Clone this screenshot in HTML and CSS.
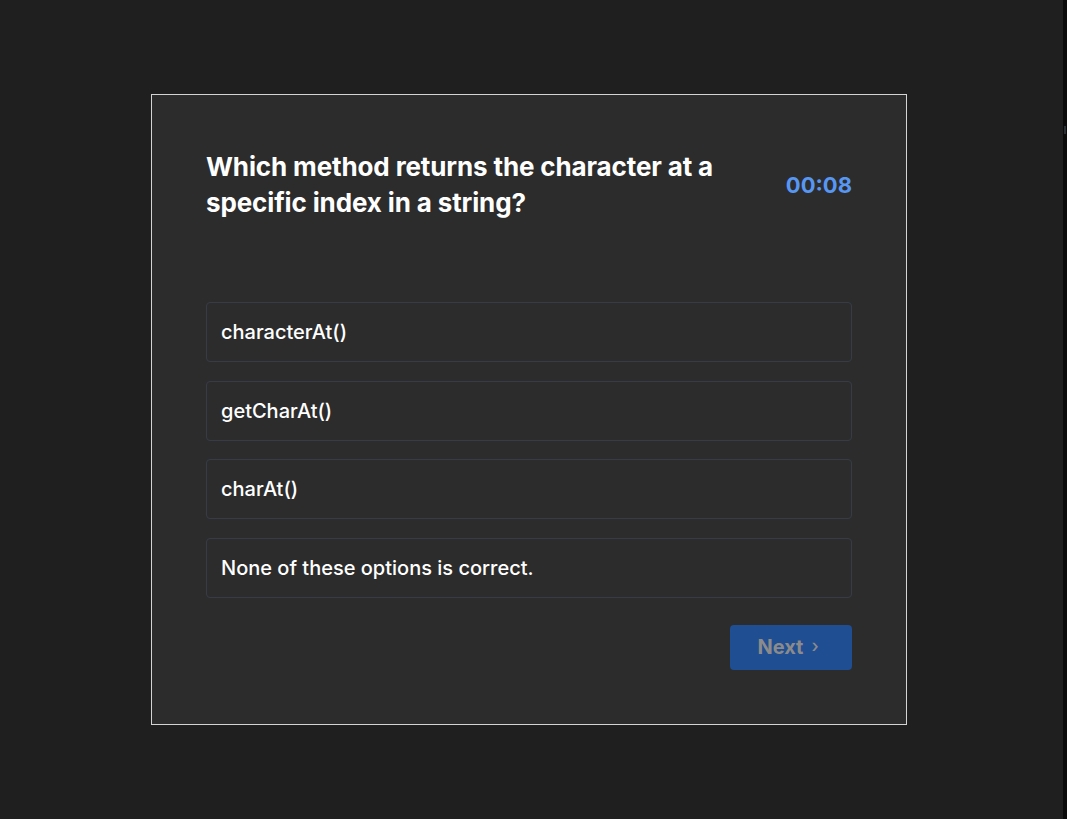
FILE: index.html
```html
<!DOCTYPE html>
<html lang="en">
<head>
<meta charset="utf-8">
<title>Quiz</title>
<link rel="stylesheet" href="styles.css">
</head>
<body>
<div class="app">
  <main class="stage">
    <section class="card">
      <header class="card-head">
        <h1 class="question">Which method returns the character at a specific index in a string?</h1>
        <div class="timer">00:08</div>
      </header>
      <ul class="options">
        <li class="option">characterAt()</li>
        <li class="option">getCharAt()</li>
        <li class="option">charAt()</li>
        <li class="option">None of these options is correct.</li>
      </ul>
      <div class="actions">
        <button class="next-btn" disabled>Next <span class="chev">&#8250;</span></button>
      </div>
    </section>
  </main>
  <div class="edge"><span class="edge-mark"></span></div>
</div>
</body>
</html>
```

FILE: styles.css
```css
* { box-sizing: border-box; }
html, body { margin: 0; padding: 0; height: 100%; }
body {
  background: #1f1f1f;
  font-family: Inter, "Noto Sans", "Liberation Sans", sans-serif;
  color: #f5f5f5;
}
.app {
  display: flex;
  height: 819px;
}
.stage {
  flex: 1;
  display: flex;
  align-items: center;
  padding-left: 151px;
}
.edge {
  width: 4px;
  background: #0b0b0b;
  padding-top: 126px;
}
.edge-mark {
  display: block;
  width: 2px;
  height: 8px;
  margin-left: 1px;
  background: #2a3034;
}
.card {
  width: 756px;
  height: 631px;
  background: #2c2c2c;
  border: 1px solid #d4d4d4;
  padding: 54px 54px 54px 54px;
  display: flex;
  flex-direction: column;
}
.card-head {
  display: flex;
  align-items: center;
  justify-content: space-between;
  gap: 24px;
}
.question {
  margin: 0;
  font-size: 26px;
  line-height: 36px;
  font-weight: 700;
  letter-spacing: -0.13px;
  color: #ffffff;
  max-width: 540px;
}
.timer {
  font-size: 22px;
  font-weight: 700;
  color: #5797f3;
  margin-top: 0;
}
.options {
  list-style: none;
  margin: 81px 0 0 0;
  padding: 0;
  display: flex;
  flex-direction: column;
  gap: 18.6px;
}
.option {
  height: 60px;
  display: flex;
  align-items: center;
  padding: 0 14px;
  border: 1px solid #363c47;
  border-radius: 4px;
  font-size: 20px;
  font-weight: 500;
  color: #ffffff;
}
.actions {
  display: flex;
  justify-content: flex-end;
  margin-top: 27px;
}
.next-btn {
  width: 122px;
  height: 45px;
  border: none;
  border-radius: 4px;
  background: #1f4e93;
  color: #8b8b8b;
  font-family: inherit;
  font-size: 20px;
  font-weight: 700;
  display: flex;
  align-items: center;
  justify-content: center;
  gap: 8px;
  padding: 0 6px 0 0;
}
.chev {
  font-size: 18px;
  font-weight: 500;
  line-height: 1;
  margin-top: -3px;
}
```
